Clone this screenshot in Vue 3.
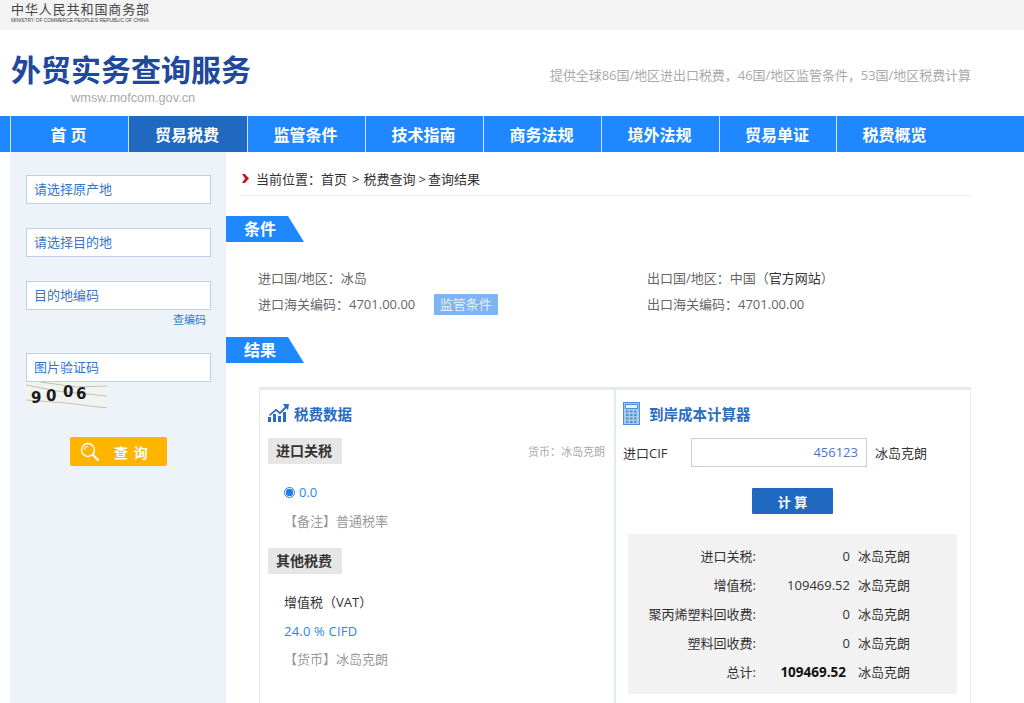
<template>
  <div class="page">
    <div class="topbar">
      <div class="ministry">
        <div class="ministry-cn">中华人民共和国商务部</div>
        <div class="ministry-en">MINISTRY OF COMMERCE PEOPLE'S REPUBLIC OF CHINA</div>
      </div>
    </div>

    <header class="header">
      <div class="brand">
        <div class="brand-title">外贸实务查询服务</div>
        <div class="brand-url">wmsw.mofcom.gov.cn</div>
      </div>
      <div class="slogan">提供全球86国/地区进出口税费，46国/地区监管条件，53国/地区税费计算</div>
    </header>

    <nav class="nav">
      <a
        v-for="item in navItems"
        :key="item"
        class="nav-item"
        :class="{ active: item === '贸易税费' }"
      >{{ item }}</a>
    </nav>

    <div class="body">
      <aside class="side">
        <div class="field">请选择原产地</div>
        <div class="field">请选择目的地</div>
        <div class="field field-code">目的地编码</div>
        <div class="code-link">查编码</div>
        <div class="field field-captcha">图片验证码</div>
        <svg class="captcha" width="81" height="26" viewBox="0 0 81 26">
          <rect width="81" height="26" fill="#f1f3ef" />
          <path d="M0 3L30 9L81 14M0 18L40 21L81 26M14 0L50 5L81 4" stroke="#bcc2bc" stroke-width="1" fill="none" />
          <text x="5" y="21" class="captcha-text">9</text>
          <text x="20" y="19" class="captcha-text">0</text>
          <text x="37" y="15" class="captcha-text">0</text>
          <text x="50" y="17" class="captcha-text">6</text>
        </svg>
        <button class="search-btn">
          <svg width="20" height="20" viewBox="0 0 20 20">
            <circle cx="8" cy="8" r="6.5" fill="none" stroke="#fff" stroke-width="1.4" />
            <path d="M12.8 12.8L18 18" stroke="#fff" stroke-width="2.2" stroke-linecap="round" />
            <path d="M4.2 8a3.8 3.8 0 0 1 3.8-3.8" fill="none" stroke="#fff" stroke-width="1" />
          </svg>
          <span>查 询</span>
        </button>
      </aside>

      <main class="main">
        <div class="crumb">
          <svg class="crumb-arrow" width="7" height="9" viewBox="0 0 7 9">
            <path d="M0 0H3L7 4.5L3 9H0L3 4.5Z" fill="#c8161d" />
          </svg>
          <span>当前位置：首页<span class="sep">&gt;</span>税费查询<span class="sep sep-tight">&gt;</span>查询结果</span>
        </div>

        <div class="sec-tag">条件</div>
        <div class="cond">
          <div class="cond-col">
            <div class="cond-row">进口国/地区：冰岛</div>
            <div class="cond-row">
              进口海关编码：4701.00.00
              <span class="cond-btn">监管条件</span>
            </div>
          </div>
          <div class="cond-col cond-right">
            <div class="cond-row">出口国/地区：中国（<span class="dark">官方网站</span>）</div>
            <div class="cond-row">出口海关编码：4701.00.00</div>
          </div>
        </div>

        <div class="sec-tag">结果</div>
        <div class="panel">
          <section class="pane-left">
            <h3 class="pane-title">
              <svg width="21" height="18" viewBox="0 0 21 18">
                <g fill="#2a6cc0">
                  <rect x="0" y="13" width="3" height="5" />
                  <rect x="5" y="10" width="3" height="8" />
                  <rect x="10" y="12" width="3" height="6" />
                  <rect x="15" y="8" width="3" height="10" />
                  <path d="M15 0L21 0L20 6L18.200 4.200L12 10.500L8 7L2 12L1 10.800L8 4.800L12 8L16.800 2.800Z" />
                </g>
              </svg>
              <span>税费数据</span>
            </h3>
            <div class="tag-row">
              <span class="gray-tag">进口关税</span>
              <span class="currency">货币：冰岛克朗</span>
            </div>
            <div class="rate">
              <span class="radio"></span>
              <span>0.0</span>
            </div>
            <div class="note">【备注】普通税率</div>
            <span class="gray-tag tag-other">其他税费</span>
            <div class="vat">增值税（VAT）</div>
            <div class="vat-rate">24.0 % CIFD</div>
            <div class="note note-cur">【货币】冰岛克朗</div>
          </section>

          <section class="pane-right">
            <h3 class="pane-title calc-title">
              <svg width="17" height="23" viewBox="0 0 17 23">
                <rect x="0.500" y="0.500" width="16" height="22" fill="#a9cbee" stroke="#4f8fd2" />
                <rect x="2.500" y="2.500" width="12" height="4" fill="#e8f2fb" stroke="#4f8fd2" />
                <g fill="#4f8fd2">
                  <template v-for="r in 4" :key="r">
                    <rect v-for="c in 3" :key="c" :x="-1 + c * 4" :y="5 + r * 3.500" width="2.500" height="2" />
                  </template>
                </g>
              </svg>
              <span>到岸成本计算器</span>
            </h3>
            <div class="cif">
              <span class="cif-label">进口CIF</span>
              <div class="cif-input">456123</div>
              <span>冰岛克朗</span>
            </div>
            <button class="calc-btn">计 算</button>
            <div class="summary">
              <div v-for="row in rows" :key="row.label" class="sum-row" :class="{ total: row.total }">
                <span class="sum-label">{{ row.label }}:</span>
                <span class="sum-value">{{ row.value }}</span>
                <span>冰岛克朗</span>
              </div>
            </div>
          </section>
        </div>
      </main>
    </div>
  </div>
</template>

<script setup>
const navItems = ['首 页', '贸易税费', '监管条件', '技术指南', '商务法规', '境外法规', '贸易单证', '税费概览']

const rows = [
  { label: '进口关税', value: '0' },
  { label: '增值税', value: '109469.52' },
  { label: '聚丙烯塑料回收费', value: '0' },
  { label: '塑料回收费', value: '0' },
  { label: '总计', value: '109469.52', total: true }
]
</script>

<style scoped>
.page {
  width: 1024px;
  height: 703px;
  overflow: hidden;
  background: #fff;
  font-family: "Open Sans", "Noto Sans CJK SC", sans-serif;
  font-size: 13px;
  color: #333;
}

.topbar {
  height: 30px;
  background: #f3f3f3;
  padding-left: 11px;
}

.ministry-cn {
  font-size: 13px;
  line-height: 14px;
  padding-top: 2px;
  letter-spacing: 0.9px;
  color: #444;
  white-space: nowrap;
}

.ministry-en {
  font-family: "Liberation Sans", sans-serif;
  font-size: 5px;
  line-height: 7px;
  margin-top: 1px;
  letter-spacing: -0.06px;
  color: #444;
  white-space: nowrap;
}

.header {
  height: 86px;
  display: flex;
  justify-content: space-between;
  padding: 0 53px 0 11px;
}

.brand-title {
  font-size: 30px;
  font-weight: 700;
  line-height: 40px;
  padding-top: 20px;
  color: #20489c;
  white-space: nowrap;
}

.brand-url {
  font-family: "Liberation Sans", sans-serif;
  font-size: 12.8px;
  line-height: 16px;
  margin-left: 60px;
  color: #aaa;
}

.slogan {
  padding-top: 36px;
  font-size: 13px;
  line-height: 18px;
  letter-spacing: -0.05px;
  color: #aaa;
}

.nav {
  height: 36px;
  background: #2088ff;
  display: flex;
  padding-left: 10px;
}

.nav-item {
  width: 118px;
  box-sizing: border-box;
  padding-right: 2px;
  border-left: 1px solid #cfe3fb;
  text-align: center;
  font-size: 16px;
  font-weight: 700;
  line-height: 38px;
  color: #fff;
  white-space: nowrap;
}

.nav-item:nth-child(2) {
  width: 119px;
}

.nav-item:nth-child(7) {
  width: 117px;
}

.nav-item.active {
  background: #1f69c1;
}

.body {
  display: flex;
  height: 551px;
}

.side {
  width: 216px;
  margin-left: 10px;
  padding: 23px 15px 0 16px;
  background: #eef3fa;
  box-sizing: border-box;
  flex: none;
}

.field {
  height: 29px;
  border: 1px solid #bfd0e8;
  background: #fff;
  box-sizing: border-box;
  padding-left: 7px;
  line-height: 27px;
  font-size: 13px;
  color: #3a74c8;
  margin-bottom: 24px;
}

.field-code {
  margin-bottom: 0;
}

.code-link {
  text-align: right;
  font-size: 11px;
  line-height: 19px;
  padding-right: 5px;
  color: #2a7cd0;
  margin-bottom: 24px;
}

.field-captcha {
  margin-bottom: 0;
}

.captcha {
  display: block;
}

.captcha-text {
  font-family: "DejaVu Sans", sans-serif;
  font-size: 15px;
  font-weight: 700;
  fill: #1a1a1a;
}

.search-btn {
  display: flex;
  align-items: center;
  width: 97px;
  height: 29px;
  margin: 29px 0 0 44px;
  padding: 0 0 0 10px;
  border: 0;
  border-radius: 2px;
  background: #ffb400;
  color: #fff;
  font-family: inherit;
  font-size: 14px;
  font-weight: 700;
}

.search-btn span {
  margin-left: 14px;
  letter-spacing: 1px;
}

.main {
  flex: 1;
  min-width: 0;
  padding-right: 53px;
}

.crumb {
  display: flex;
  align-items: center;
  height: 44px;
  margin-left: 16px;
  padding-top: 10px;
  box-sizing: border-box;
  border-bottom: 1px solid #eee;
  color: #333;
}

.crumb-arrow {
  margin-right: 7px;
}

.sep {
  margin: 0 4px 0 5px;
}

.sep-tight {
  margin: 0 2px 0 3px;
}

.sec-tag {
  width: 78px;
  height: 26px;
  background: #2088ff;
  clip-path: polygon(0 0, 62px 0, 100% 100%, 0 100%);
  color: #fff;
  font-size: 16px;
  font-weight: 700;
  line-height: 27px;
  padding-left: 18px;
  box-sizing: border-box;
  margin-top: 20px;
}

.cond {
  display: flex;
  padding: 23px 0 0 32px;
  height: 52px;
  color: #666;
}

.cond-col {
  width: 389px;
  flex: none;
}

.cond-right {
  width: 324px;
}

.cond-row {
  height: 26px;
  line-height: 26px;
  white-space: nowrap;
}

.cond-btn {
  display: inline-block;
  width: 64px;
  height: 21px;
  line-height: 21px;
  margin-left: 15px;
  text-align: center;
  background: #7fb4f2;
  color: #e6f0fc;
  border-radius: 1px;
}

.dark {
  color: #333;
}

.panel {
  display: flex;
  margin: 24px 0 0 33px;
  width: 712px;
  height: 400px;
  border: 1px solid #e3ebf1;
  border-top-width: 3px;
  box-sizing: border-box;
}

.pane-left {
  width: 356px;
  height: 100%;
  border-right: 2px solid #e3ebf1;
  padding: 0 9px 0 8px;
  box-sizing: border-box;
  flex: none;
}

.pane-right {
  flex: 1;
  padding: 0 12px 0 7px;
}

.pane-title {
  display: flex;
  align-items: center;
  gap: 5px;
  margin: 0 0 2px;
  height: 46px;
  font-size: 14.5px;
  font-weight: 700;
  color: #2a6cc0;
}

.calc-title {
  gap: 9px;
}

.tag-row {
  display: flex;
  justify-content: space-between;
  align-items: center;
}

.gray-tag {
  display: inline-block;
  height: 26px;
  padding: 0 10px 0 8px;
  background: #e6e6e6;
  border-radius: 1px;
  font-size: 14px;
  font-weight: 700;
  line-height: 26px;
  color: #333;
}

.currency {
  font-size: 11px;
  color: #aaa;
}

.rate {
  display: flex;
  align-items: center;
  gap: 4px;
  height: 22px;
  margin: 17px 0 0 16px;
  color: #2a86f0;
  font-size: 13px;
}

.radio {
  width: 11px;
  height: 11px;
  border-radius: 50%;
  border: 1px solid #1f7fe8;
  background: radial-gradient(circle, #1f7fe8 0 3.5px, #fff 4px);
  box-sizing: border-box;
}

.note {
  margin: 8px 0 0 16px;
  line-height: 20px;
  color: #999;
}

.tag-other {
  margin-top: 17px;
}

.vat {
  margin: 18px 0 0 16px;
  line-height: 20px;
  color: #333;
}

.vat-rate {
  margin: 9px 0 0 16px;
  line-height: 20px;
  letter-spacing: 0.2px;
  color: #2a86f0;
}

.note-cur {
  margin-top: 8px;
}

.cif {
  display: flex;
  align-items: center;
  height: 29px;
  white-space: nowrap;
}

.cif-label {
  width: 68px;
}

.cif-input {
  width: 176px;
  height: 29px;
  margin-right: 8px;
  padding-right: 8px;
  box-sizing: border-box;
  border: 1px solid #bfd0e8;
  text-align: right;
  line-height: 26px;
  color: #4a78c8;
}

.calc-btn {
  display: block;
  width: 81px;
  height: 26px;
  margin: 21px 0 0 129px;
  padding: 0;
  border: 0;
  border-radius: 1px;
  background: #1f69c1;
  color: #fff;
  font-family: inherit;
  font-size: 13px;
  font-weight: 700;
}

.summary {
  width: 329px;
  height: 160px;
  margin: 20px 0 0 5px;
  padding-top: 8px;
  box-sizing: border-box;
  background: #f2f2f2;
}

.sum-row {
  display: flex;
  height: 29px;
  line-height: 29px;
  white-space: nowrap;
}

.sum-label {
  width: 128px;
  text-align: right;
}

.sum-value {
  width: 94px;
  margin-right: 8px;
  text-align: right;
}

.total .sum-value {
  font-size: 13.5px;
  font-weight: 700;
  color: #111;
  padding-right: 4px;
  box-sizing: border-box;
}
</style>
